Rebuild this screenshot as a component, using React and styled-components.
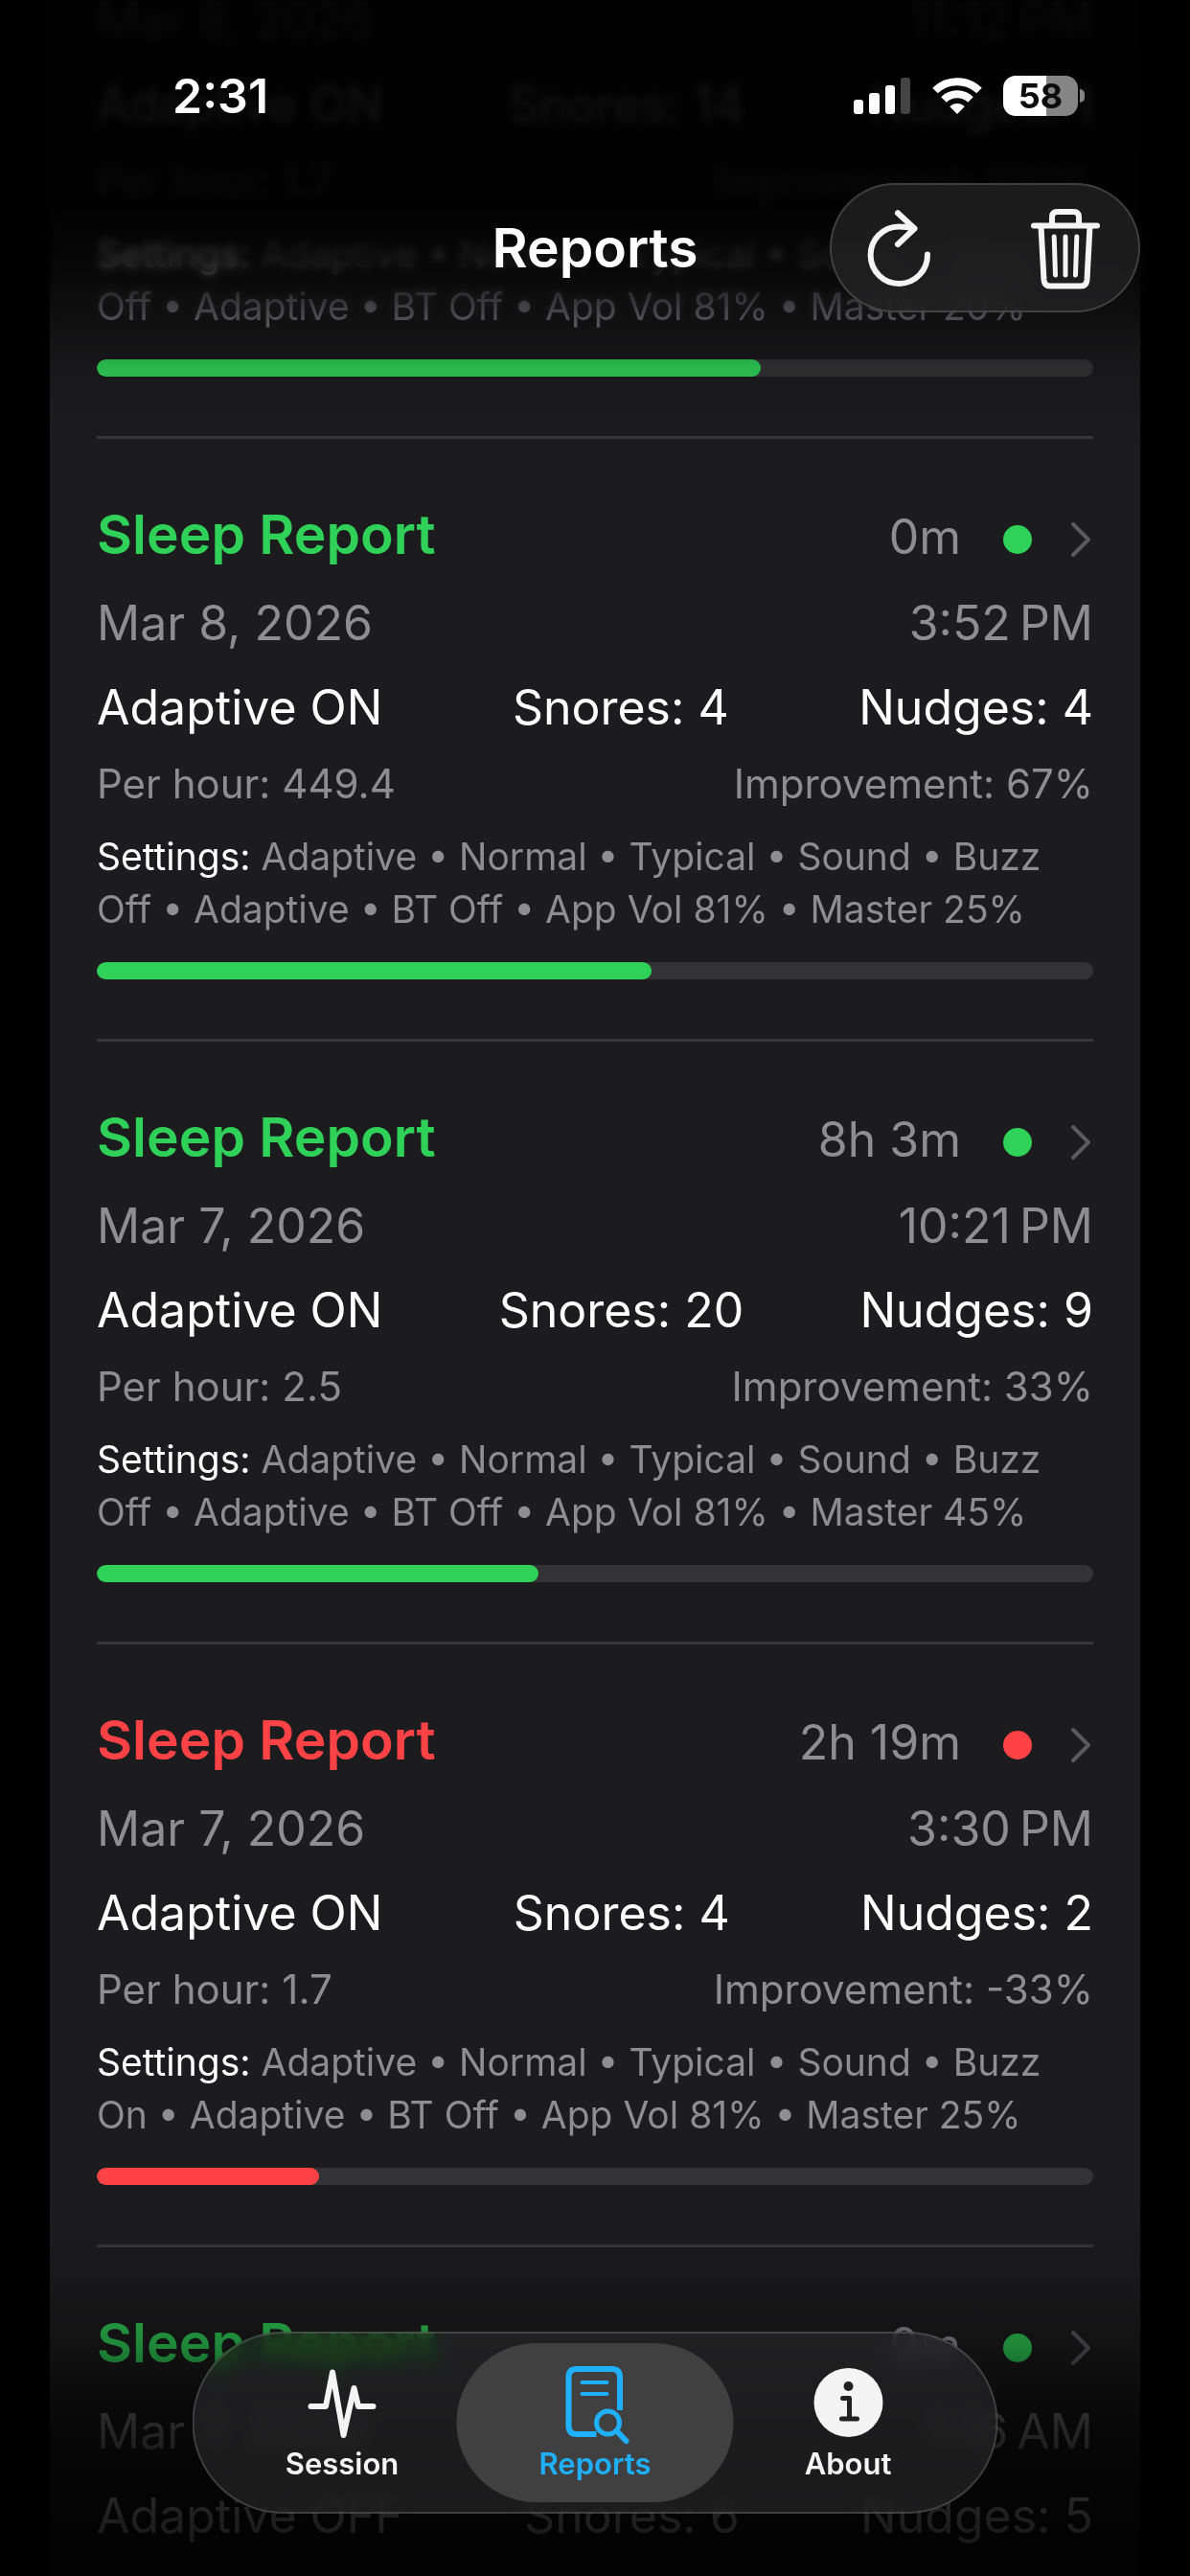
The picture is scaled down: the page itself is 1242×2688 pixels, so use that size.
import { useLayoutEffect, useRef, useState } from "react";
import styled, { createGlobalStyle } from "styled-components";

const reports = [
    { id: 1, date: "Mar 8, 2026", time: "11:12\u202fPM", duration: "8h 21m", adaptive: "ON", snores: 14, nudges: 1, perHour: "1.7", improvement: 100, buzz: "Off", master: 20 },
    { id: 2, date: "Mar 8, 2026", time: "3:52\u202fPM", duration: "0m", adaptive: "ON", snores: 4, nudges: 4, perHour: "449.4", improvement: 67, buzz: "Off", master: 25 },
    { id: 3, date: "Mar 7, 2026", time: "10:21\u202fPM", duration: "8h 3m", adaptive: "ON", snores: 20, nudges: 9, perHour: "2.5", improvement: 33, buzz: "Off", master: 45 },
    { id: 4, date: "Mar 7, 2026", time: "3:30\u202fPM", duration: "2h 19m", adaptive: "ON", snores: 4, nudges: 2, perHour: "1.7", improvement: -33, buzz: "On", master: 25 },
    { id: 5, date: "Mar 7, 2026", time: "1:16\u202fAM", duration: "0m", adaptive: "OFF", snores: 6, nudges: 5, perHour: "360.0", improvement: 17, buzz: "Off", master: 25 },
];

export default function App(){
    const [tab, setTab] = useState("Reports");
    const scroller = useRef(null);

    // open the list with the latest report already scrolled under the header
    useLayoutEffect(() => {
        scroller.current.scrollTop = 171;
    }, []);

    return(
        <Screen>
            <GlobalStyle />
            <Scroller ref={scroller}>
                <List>
                    {reports.map((report) => (
                        <Report key={report.id} report={report} />
                    ))}
                </List>
            </Scroller>
            <TopBlur />
            <TopFade />
            <BottomFade />
            <Header>
                <StatusBar>
                    <Clock>2:31</Clock>
                    <StatusIcons>
                        <SignalIcon />
                        <WifiIcon />
                        <Battery>
                            <Charge $level={58}>58</Charge>
                            <Tip />
                        </Battery>
                    </StatusIcons>
                </StatusBar>
                <NavBar>
                    <PageTitle>Reports</PageTitle>
                    <Actions>
                        <IconButton aria-label="Refresh"><RefreshIcon /></IconButton>
                        <IconButton aria-label="Delete"><TrashIcon /></IconButton>
                    </Actions>
                </NavBar>
            </Header>
            <TabBar>
                <Tab $active={tab === "Session"} onClick={() => setTab("Session")}>
                    <SessionIcon />
                    Session
                </Tab>
                <Tab $active={tab === "Reports"} onClick={() => setTab("Reports")}>
                    <ReportsIcon />
                    Reports
                </Tab>
                <Tab $active={tab === "About"} onClick={() => setTab("About")}>
                    <AboutIcon />
                    About
                </Tab>
            </TabBar>
        </Screen>
    );
}

function Report({ report }){
    const color = report.improvement < 0 ? "#ff4245" : "#30d158";
    // improvement runs from -100% to 200%
    const progress = (report.improvement + 100) / 3;

    return(
        <li>
            <Card href={`#report-${report.id}`}>
                <Row>
                    <Name $color={color}>Sleep Report</Name>
                    <Duration>
                        <Muted>{report.duration}</Muted>
                        <Dot $color={color} />
                        <ChevronIcon />
                    </Duration>
                </Row>
                <Row>
                    <Muted>{report.date}</Muted>
                    <Muted>{report.time}</Muted>
                </Row>
                <Row>
                    <span>Adaptive {report.adaptive}</span>
                    <span>Snores: {report.snores}</span>
                    <span>Nudges: {report.nudges}</span>
                </Row>
                <Details>
                    <span>Per hour: {report.perHour}</span>
                    <span>Improvement: {report.improvement}%</span>
                </Details>
                <Settings>
                    <b>Settings:</b> Adaptive • Normal • Typical • Sound • Buzz {report.buzz} • Adaptive • BT Off • App Vol 81% • Master {report.master}%
                </Settings>
                <Track>
                    <Fill $color={color} style={{ width: `${progress}%` }} />
                </Track>
            </Card>
        </li>
    );
}

function ChevronIcon(){
    return(
        <svg width="24" height="35" viewBox="0 0 24 35" fill="none" stroke="#5b5b5f" strokeWidth="4" strokeLinecap="round" strokeLinejoin="round">
            <path d="M3 4L19 20L3 36" />
        </svg>
    );
}

function SignalIcon(){
    return(
        <svg width="60" height="38" viewBox="0 0 60 38" fill="#fff">
            <rect x="0" y="23" width="10" height="15" rx="3" />
            <rect x="16" y="16" width="11" height="22" rx="3" />
            <rect x="33" y="8" width="10" height="30" rx="3" />
            <rect x="49" y="0" width="10" height="38" rx="3" fill="#444" />
        </svg>
    );
}

function WifiIcon(){
    return(
        <svg width="52" height="38" viewBox="0 0 52 38" fill="none" stroke="#fff" strokeWidth="8">
            <path d="M3 13.500A33 33 0 0 1 49 13.500" />
            <path d="M12 23A20 20 0 0 1 40 23" />
            <path d="M26 38L18.300 30.200A11 11 0 0 1 33.700 30.200Z" fill="#fff" stroke="none" />
        </svg>
    );
}

function RefreshIcon(){
    return(
        <svg width="72" height="84" viewBox="0 0 72 84" fill="none" stroke="#f4f4f4" strokeWidth="6" strokeLinecap="round" strokeLinejoin="round">
            <path d="M66 48.500A29.700 29.700 0 1 1 36 19.500Q44 19.500 52 21.500" />
            <path d="M35 5.200L52.500 21.500L35 38" />
        </svg>
    );
}

function TrashIcon(){
    return(
        <svg width="72" height="84" viewBox="0 0 72 84" fill="none" stroke="#f4f4f4" strokeWidth="6" strokeLinecap="round" strokeLinejoin="round">
            <path d="M3 18.500H69" />
            <path d="M22 18V9.500Q22 4 27.500 4H44.500Q50 4 50 9.500V18" />
            <path d="M10.500 19L13.500 75Q14 81.500 20 81.500H52Q58 81.500 58.500 75L61.500 19" />
            <path d="M24.200 30L25.500 70M36 30V70M47.800 30L46.500 70" strokeWidth="5" />
        </svg>
    );
}

function SessionIcon(){
    return(
        <svg width="76" height="80" viewBox="0 0 76 80" fill="none" stroke="currentColor" strokeWidth="6" strokeLinecap="round" strokeLinejoin="round">
            <path d="M5 42H20.500L27.500 6.500L39 72L50 23L54.500 42H70" />
        </svg>
    );
}

function ReportsIcon(){
    return(
        <svg width="76" height="80" viewBox="0 0 76 80" fill="none" stroke="currentColor" strokeWidth="6" strokeLinecap="round">
            <path d="M63.500 46V11.500Q63.500 3 55 3H18.500Q10 3 10 11.500V62Q10 71 18.500 71H39" strokeLinecap="butt" />
            <path d="M24 17H50M24 29H50" strokeWidth="4" />
            <circle cx="51" cy="59" r="12" strokeWidth="5" />
            <path d="M60 67.500L70 78" />
        </svg>
    );
}

function AboutIcon(){
    return(
        <svg width="76" height="80" viewBox="0 0 76 80">
            <circle cx="38" cy="38" r="36" fill="currentColor" />
            <circle cx="38" cy="21" r="5" fill="#212121" />
            <path d="M32 33.500H39V55M31 55H47" fill="none" stroke="#212121" strokeWidth="5" strokeLinecap="round" strokeLinejoin="round" />
        </svg>
    );
}


const GlobalStyle = createGlobalStyle`
    *{
        box-sizing: border-box;
    }
    body{
        margin: 0;
        background-color: #000000;
        color: #ffffff;
        font-family: Inter, "Liberation Sans", sans-serif;
    }
    svg{
        display: block;
        overflow: visible;
    }
`
const Screen = styled.div`
    position: relative;
    height: 100vh;
    overflow: hidden;
`
const Scroller = styled.main`
    height: 100%;
    padding: 0 52px;
    overflow-y: auto;
    scrollbar-width: none;
`
const List = styled.ul`
    margin: 0;
    padding: 0 49px;
    list-style: none;
    background-color: #1c1c1e;
`
const Card = styled.a`
    display: flex;
    flex-direction: column;
    gap: 24px;
    padding: 64px 0 62px;
    border-bottom: 3px solid #38383a;
    color: inherit;
    text-decoration: none;
    font-size: 50px;
    line-height: 64px;
`
const Row = styled.div`
    display: flex;
    justify-content: space-between;
    align-items: baseline;
`
const Name = styled.h2`
    margin: 0;
    color: ${({ $color }) => $color};
    font-size: 57px;
    font-weight: 600;
    line-height: 72px;
`
const Duration = styled.div`
    display: flex;
    align-items: baseline;
    gap: 40px;
`
const Muted = styled.span`
    color: #8d8d92;
`
const Dot = styled.span`
    width: 30px;
    height: 30px;
    margin-left: 4px;
    border-radius: 50%;
    background-color: ${({ $color }) => $color};
`
const Details = styled(Row)`
    color: #8d8d92;
    font-size: 42px;
    line-height: 48px;
`
const Settings = styled.p`
    margin: 0;
    color: #8d8d92;
    font-size: 39px;
    line-height: 55px;
    b{
        color: #ffffff;
        font-weight: 400;
    }
`
const Track = styled.div`
    height: 18px;
    margin-top: 4px;
    border-radius: 9px;
    background-color: #333335;
    overflow: hidden;
`
const Fill = styled.div`
    height: 100%;
    border-radius: 9px;
    background-color: ${({ $color }) => $color};
`
const TopBlur = styled.div`
    position: absolute;
    inset: 0 0 auto;
    height: 340px;
    backdrop-filter: blur(4px);
    mask-image: linear-gradient(#000 80%, transparent);
    pointer-events: none;
`
const TopFade = styled.div`
    position: absolute;
    inset: 0 0 auto;
    height: 460px;
    background-image: linear-gradient(
        rgba(0, 0, 0, 0.93) 0,
        rgba(0, 0, 0, 0.92) 210px,
        rgba(0, 0, 0, 0.8) 260px,
        rgba(0, 0, 0, 0.48) 320px,
        rgba(0, 0, 0, 0.12) 384px,
        transparent 460px
    );
    pointer-events: none;
`
const BottomFade = styled.div`
    position: absolute;
    inset: auto 0 0;
    height: 400px;
    background-image: linear-gradient(
        transparent,
        rgba(0, 0, 0, 0.12) 80px,
        rgba(0, 0, 0, 0.36) 160px,
        rgba(0, 0, 0, 0.66) 220px,
        rgba(0, 0, 0, 0.8) 270px,
        rgba(0, 0, 0, 0.9) 360px
    );
    pointer-events: none;
`
const Header = styled.header`
    position: absolute;
    inset: 0 0 auto;
`
const StatusBar = styled.div`
    display: flex;
    justify-content: space-between;
    align-items: center;
    height: 191px;
    padding: 70px 110px 61px 180px;
`
const Clock = styled.span`
    font-size: 50px;
    font-weight: 600;
`
const StatusIcons = styled.div`
    display: flex;
    align-items: center;
    gap: 22px;
`
const Battery = styled.div`
    display: flex;
    align-items: center;
    gap: 2px;
`
const Charge = styled.div`
    width: 78px;
    height: 42px;
    border-radius: 13px;
    background-image: linear-gradient(90deg, #ffffff ${({ $level }) => $level}%, #858585 0);
    color: #0c0c0c;
    font-size: 36px;
    font-weight: 700;
    line-height: 42px;
    text-align: center;
`
const Tip = styled.div`
    width: 5px;
    height: 14px;
    border-radius: 0 7px 7px 0;
    background-color: #858585;
`
const NavBar = styled.div`
    display: grid;
    grid-template-columns: 1fr auto 1fr;
    align-items: center;
    padding: 0 52px;
`
const PageTitle = styled.h1`
    grid-column: 2;
    margin: 0;
    font-size: 57px;
    font-weight: 600;
`
const Actions = styled.div`
    justify-self: end;
    display: flex;
    align-items: center;
    gap: 102px;
    height: 135px;
    padding: 0 42px 0 36px;
    border-radius: 68px;
    background-color: rgba(36, 36, 37, 0.75);
    box-shadow: inset 0 0 0 2px rgba(255, 255, 255, 0.16);
    backdrop-filter: blur(14px);
`
const IconButton = styled.button`
    padding: 0;
    border: none;
    background: none;
    cursor: pointer;
`
const TabBar = styled.nav`
    position: absolute;
    bottom: 65px;
    left: 50%;
    transform: translateX(-50%);
    display: flex;
    padding: 12px;
    border-radius: 95px;
    background-color: rgba(40, 40, 41, 0.66);
    box-shadow: inset 0 0 0 2px rgba(255, 255, 255, 0.16);
    backdrop-filter: blur(10px) saturate(2.5);
`
const Tab = styled.button`
    display: flex;
    flex-direction: column;
    align-items: center;
    gap: 4px;
    width: 289px;
    height: 166px;
    padding: 24px 0 0;
    border: none;
    border-radius: 83px;
    background-color: ${({ $active }) => ($active ? "#404041" : "transparent")};
    color: ${({ $active }) => ($active ? "#1fb0ff" : "#f4f4f4")};
    font-family: inherit;
    font-size: 31px;
    font-weight: 600;
    line-height: 36px;
    cursor: pointer;
    & + &{
        margin-left: -25px;
    }
`
